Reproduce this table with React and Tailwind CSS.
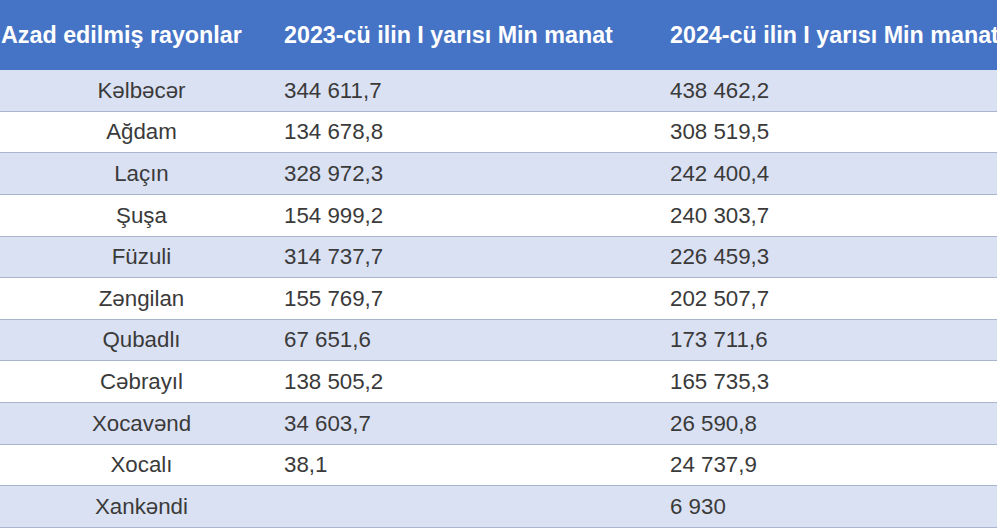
import React from "react";

const rows = [
  ["Kəlbəcər", "344 611,7", "438 462,2"],
  ["Ağdam", "134 678,8", "308 519,5"],
  ["Laçın", "328 972,3", "242 400,4"],
  ["Şuşa", "154 999,2", "240 303,7"],
  ["Füzuli", "314 737,7", "226 459,3"],
  ["Zəngilan", "155 769,7", "202 507,7"],
  ["Qubadlı", "67 651,6", "173 711,6"],
  ["Cəbrayıl", "138 505,2", "165 735,3"],
  ["Xocavənd", "34 603,7", "26 590,8"],
  ["Xocalı", "38,1", "24 737,9"],
  ["Xankəndi", "", "6 930"],
];

export default function App() {
  return (
    <div
      className="w-[1000px] h-[528px] bg-white overflow-hidden"
      style={{ fontFamily: '"Liberation Sans", Arial, sans-serif' }}
    >
      <div className="w-[997px] h-[528px] flex flex-col overflow-hidden">
        <div className="h-[70px] shrink-0 bg-[#4573c6] grid grid-cols-[283px_386px_1fr] items-center text-white font-bold text-[23.3px] whitespace-nowrap overflow-hidden">
          <div className="pl-[1px]">Azad edilmiş rayonlar</div>
          <div className="pl-[1px]">2023-cü ilin I yarısı Min manat</div>
          <div className="pl-[1px] overflow-hidden">2024-cü ilin I yarısı Min manat</div>
        </div>
        {rows.map((r, i) => (
          <div
            key={i}
            className={
              "flex-1 grid grid-cols-[283px_386px_1fr] items-center border-b border-[#a9b4cd] text-[22.3px] text-[#3a3a3a] whitespace-nowrap " +
              (i % 2 === 0 ? "bg-[#dae1f3]" : "bg-white")
            }
          >
            <div className="text-center">{r[0]}</div>
            <div className="pl-[1px]">{r[1]}</div>
            <div className="pl-[1px]">{r[2]}</div>
          </div>
        ))}
      </div>
    </div>
  );
}
